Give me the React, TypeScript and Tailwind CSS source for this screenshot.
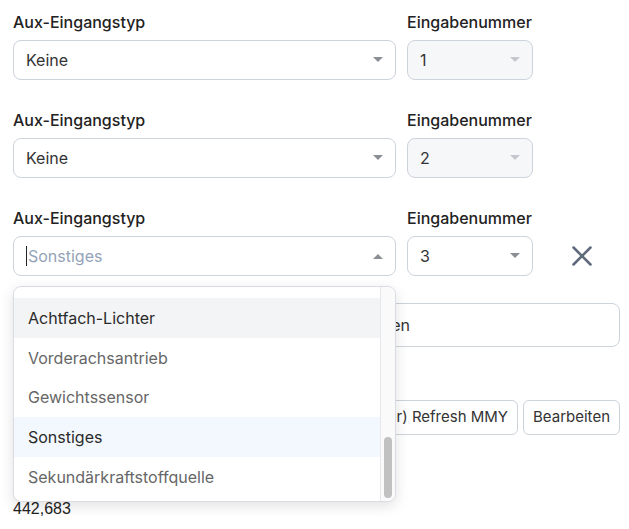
import { X } from "lucide-react";

const font = { fontFamily: "Inter, 'Noto Sans', sans-serif" };

function Caret({ up = false, light = false }: { up?: boolean; light?: boolean }) {
  return (
    <svg width="10" height="6" viewBox="0 0 10 6" className={up ? "rotate-180" : ""}>
      <path d="M0 0 L10 0 L5 5 Z" fill={light ? "#c4c8ce" : "#8a8f96"} />
    </svg>
  );
}

function Labels() {
  return (
    <div className="flex gap-[11px] text-base leading-6 font-medium text-[#222]">
      <span className="w-[383px]">Aux-Eingangstyp</span>
      <span>Eingabenummer</span>
    </div>
  );
}

function Row({ value, num }: { value: string; num: string }) {
  return (
    <div className="flex flex-col gap-[6px]">
      <Labels />
      <div className="flex gap-[11px]">
        <div className="flex h-10 w-[383px] items-center justify-between rounded-lg border border-[#cdd3dc] bg-white px-3 text-base text-[#333]">
          <span>{value}</span>
          <Caret />
        </div>
        <div className="flex h-10 w-[126px] items-center justify-between rounded-lg border border-[#cdd3dc] bg-[#f6f7f8] px-3 text-base text-[#333]">
          <span>{num}</span>
          <Caret light />
        </div>
      </div>
    </div>
  );
}

const options = [
  { label: "Achtfach-Lichter", cls: "bg-[#f3f4f6] text-[#2a2a2a]" },
  { label: "Vorderachsantrieb", cls: "text-[#666]" },
  { label: "Gewichtssensor", cls: "text-[#666]" },
  { label: "Sonstiges", cls: "bg-[#f2f8fd] text-[#2a2a2a]" },
  { label: "Sekundärkraftstoffquelle", cls: "text-[#666]" },
];

export default function App() {
  return (
    <div className="relative h-[529px] w-[629px] overflow-hidden bg-white pl-[13px] pt-[10px]" style={font}>
      <div className="flex flex-col gap-[28px]">
        <Row value="Keine" num="1" />
        <Row value="Keine" num="2" />
        <div className="flex flex-col gap-[6px]">
          <Labels />
          <div className="flex items-center gap-[11px]">
            <div className="flex h-10 w-[383px] items-center justify-between rounded-lg border border-[#cdd3dc] bg-white px-3 text-base">
              <span className="flex items-center text-[#94a3b8]">
                <span className="mr-[1px] h-5 w-px bg-[#222]" />
                Sonstiges
              </span>
              <Caret up />
            </div>
            <div className="flex h-10 w-[126px] items-center justify-between rounded-lg border border-[#cdd3dc] bg-white px-3 text-base text-[#333]">
              <span>3</span>
              <Caret />
            </div>
            <X className="ml-[21px] h-[34px] w-[34px] text-[#5f6b7a]" strokeWidth={1.8} />
          </div>
        </div>
      </div>

      <div className="mt-[27px] flex h-11 w-[607px] items-center rounded-lg border border-[#cdd3dc] pl-3 text-base text-[#333]">
        <span className="w-[384px] overflow-hidden whitespace-nowrap text-right">Fahrzeugbeschreibung hinzufügen</span>
      </div>

      <div className="mt-[53px] flex w-[607px] justify-end gap-[5px]">
        <button className="h-[35px] rounded-md border border-[#cdd3dc] px-[9px] text-[15px] text-[#333]">
          (Superuser) Refresh MMY
        </button>
        <button className="h-[35px] rounded-md border border-[#cdd3dc] px-[9px] text-[15px] text-[#333]">
          Bearbeiten
        </button>
      </div>

      <div className="mt-[64px] text-base leading-5 text-[#222]" style={{ fontFamily: "'Liberation Sans', Arial, sans-serif" }}>
        442,683
      </div>

      <div className="absolute left-[13px] top-[286px] flex h-[216px] w-[383px] overflow-hidden rounded-lg border border-[#d9dde3] bg-white shadow-[0_4px_14px_rgba(0,0,0,0.12)]">
        <div className="flex flex-1 flex-col pt-[11px]">
          {options.map((o) => (
            <div key={o.label} className={`flex h-[39.7px] items-center pl-[14px] text-base ${o.cls}`}>
              {o.label}
            </div>
          ))}
        </div>
        <div className="relative w-[15px] border-l border-[#e5e7eb] bg-[#fafafa]">
          <div className="absolute bottom-[3px] left-[3px] h-[61px] w-[8px] rounded-full bg-[#c1c1c1]" />
        </div>
      </div>
    </div>
  );
}
